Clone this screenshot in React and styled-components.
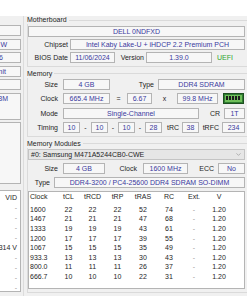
import React from "react";
import styled, { createGlobalStyle } from "styled-components";
import { ChevronDown } from "lucide-react";

const GlobalStyle = createGlobalStyle`
    body {
        margin: 0;
        background: #ffffff;
        font-family: "Liberation Sans", Arial, sans-serif;
    }
`;

const Window = styled.div`
    width: 247px;
    height: 296px;
    overflow: hidden;
    display: flex;
    flex-direction: column;
    background: #f0f0f0;
    font-size: 7px;
    color: #1e1e1e;
`;

const TopStrip = styled.div`
    height: 16px;
    flex-shrink: 0;
    background: #ffffff;
`;

const Body = styled.div`
    flex: 1;
    display: flex;
`;

// CPU pane: only its right edge is in view, the rest runs off to the left
const LeftPane = styled.div`
    width: 23px;
    flex-shrink: 0;
    border-right: 1px solid #dcdcdc;
`;

const LeftInner = styled.div`
    width: 80px;
    margin-left: -57px;
    display: flex;
    flex-direction: column;
    gap: 2.5px;
    padding-top: 9px;
`;

const CutBox = styled.div`
    height: ${(p) => p.h || 11}px;
    margin-right: 2px;
    box-sizing: border-box;
    border: 1px solid #b4b4b4;
    background: #f7f7f7;
    color: #3a3a9e;
    text-align: right;
    padding-right: ${(p) => p.pad || 12}px;
    line-height: 9px;
    white-space: nowrap;
`;

const CutList = styled.div`
    margin-top: 3px;
    margin-right: 2px;
    height: 102px;
    box-sizing: border-box;
    border: 1px solid #b4b4b4;
    background: #ffffff;
    padding: 2px 3px 0 0;
    text-align: right;
    line-height: 10px;
    white-space: nowrap;
`;

const ListLine = styled.div`
    color: ${(p) => (p.dim ? "#9a9a9a" : "#1e1e1e")};
`;

const RightPane = styled.div`
    flex: 1;
    padding-left: 3px;
    display: flex;
    flex-direction: column;
    gap: 3px;
`;

const Group = styled.fieldset`
    margin: 0;
    padding: 1.5px 2px 3px 0;
    border: 1px solid #dadada;
    border-right: none;
    min-width: 0;
    display: flex;
    flex-direction: column;
    gap: ${(p) => p.gap || 2}px;
`;

const Legend = styled.legend`
    padding: 0 2px 0 0;
    margin-left: -1px;
    line-height: 8px;
    color: #1e1e1e;
`;

const Row = styled.div`
    display: flex;
    align-items: center;
    height: 11px;
`;

const Label = styled.span`
    width: ${(p) => p.w}px;
    flex-shrink: 0;
    text-align: right;
    padding-right: ${(p) => p.pad ?? 2}px;
    box-sizing: border-box;
    white-space: nowrap;
`;

const Value = styled.div`
    width: ${(p) => (p.w ? `${p.w}px` : "auto")};
    flex: ${(p) => (p.w ? "none" : 1)};
    height: 11px;
    box-sizing: border-box;
    border: 1px solid #b4b4b4;
    background: #f7f7f7;
    color: #3a3a9e;
    text-align: center;
    line-height: 9px;
    white-space: nowrap;
    overflow: hidden;
`;

const Sep = styled.span`
    width: ${(p) => p.w}px;
    flex-shrink: 0;
    text-align: center;
`;

const Green = styled.span`
    color: #2fa52f;
    padding-left: 5px;
`;

const Select = styled.div`
    height: 11px;
    box-sizing: border-box;
    border: 1px solid #c4c4c4;
    background: #e6e6e6;
    display: flex;
    align-items: center;
    justify-content: space-between;
    padding: 0 2px;
    color: #1e1e1e;
`;

const Table = styled.div`
    height: 98px;
    box-sizing: border-box;
    border: 1px solid #b4b4b4;
    background: #ffffff;
    padding-top: 1px;
`;

const cols = "28px 23px 25px 25px 26px 26px 24px 26px";

const HeadRow = styled.div`
    display: grid;
    grid-template-columns: ${cols};
    height: 8px;
    line-height: 8px;
    margin-bottom: 3.5px;
`;

const DataRow = styled.div`
    display: grid;
    grid-template-columns: ${cols};
    height: 9.6px;
    line-height: 9.6px;
`;

const Cell = styled.span`
    text-align: ${(p) => (p.first ? "left" : "center")};
    padding-left: ${(p) => (p.first ? 1 : 0)}px;
    color: ${(p) => (p.dim ? "#9a9a9a" : "inherit")};
`;

const DimmIcon = () => (
    <svg width="21" height="11" viewBox="0 0 21 11">
        <rect x="0.5" y="0.5" width="20" height="10" fill="#2f7d32" stroke="#1d4f1f" />
        <rect x="2" y="2" width="17" height="7" fill="#6fbf5a" />
        {[3, 6, 9, 12, 15].map((x) => (
            <rect key={x} x={x} y="3" width="2" height="4" fill="#1b1b1b" />
        ))}
    </svg>
);

const timings = [
    ["1600", "22", "22", "22", "52", "74"],
    ["1467", "21", "21", "21", "47", "68"],
    ["1333", "19", "19", "19", "43", "61"],
    ["1200", "17", "17", "17", "39", "55"],
    ["1067", "15", "15", "15", "35", "49"],
    ["933.3", "13", "13", "13", "30", "43"],
    ["800.0", "11", "11", "11", "26", "37"],
    ["666.7", "10", "10", "10", "22", "31"],
];

const vids = ["-", "-", "-", "-", "0.7314 V", "-", "-", "-", "-"];

export default function App() {
    return (
        <>
            <GlobalStyle />
            <Window>
                <TopStrip />
                <Body>
                    <LeftPane>
                        <LeftInner>
                            <CutBox />
                            <CutBox pad={13}>15.0 W</CutBox>
                            <CutBox pad={17}>6</CutBox>
                            <CutBox pad={14}>Unit</CutBox>
                            <CutBox />
                            <CutBox h={27} pad={12}>L3 3M</CutBox>
                            <CutBox h={62} />
                            <CutList>
                                <ListLine>VID</ListLine>
                                {vids.map((v, i) => (
                                    <ListLine key={i} dim={v === "-"}>
                                        {v}
                                    </ListLine>
                                ))}
                            </CutList>
                        </LeftInner>
                    </LeftPane>

                    <RightPane>
                        <Group>
                            <Legend>Motherboard</Legend>
                            <Row>
                                <Value>DELL 0NDFXD</Value>
                            </Row>
                            <Row>
                                <Label w={42}>Chipset</Label>
                                <Value>Intel Kaby Lake-U + iHDCP 2.2 Premium PCH</Value>
                            </Row>
                            <Row>
                                <Label w={42}>BIOS Date</Label>
                                <Value w={45}>11/06/2024</Value>
                                <Label w={31}>Version</Label>
                                <Value w={66}>1.39.0</Value>
                                <Green>UEFI</Green>
                            </Row>
                        </Group>

                        <Group gap={3.3}>
                            <Legend>Memory</Legend>
                            <Row>
                                <Label w={35} pad={5}>Size</Label>
                                <Value w={47}>4 GB</Value>
                                <Label w={48} pad={4}>Type</Label>
                                <Value>DDR4 SDRAM</Value>
                            </Row>
                            <Row>
                                <Label w={35} pad={5}>Clock</Label>
                                <Value w={47}>665.4 MHz</Value>
                                <Sep w={17}>=</Sep>
                                <Value w={25}>6.67</Value>
                                <Sep w={25}>x</Sep>
                                <Value w={41}>99.8 MHz</Value>
                                <Sep w={5} />
                                <DimmIcon />
                            </Row>
                            <Row>
                                <Label w={35} pad={5}>Mode</Label>
                                <Value w={136}>Single-Channel</Value>
                                <Label w={25} pad={4}>CR</Label>
                                <Value>1T</Value>
                            </Row>
                            <Row>
                                <Label w={35} pad={5}>Timing</Label>
                                <Value w={17}>10</Value>
                                <Sep w={11}>-</Sep>
                                <Value w={17}>10</Value>
                                <Sep w={10}>-</Sep>
                                <Value w={17}>10</Value>
                                <Sep w={10}>-</Sep>
                                <Value w={17}>28</Value>
                                <Label w={20} pad={3}>tRC</Label>
                                <Value w={17}>38</Value>
                                <Label w={23} pad={3}>tRFC</Label>
                                <Value>234</Value>
                            </Row>
                        </Group>

                        <Group gap={3}>
                            <Legend>Memory Modules</Legend>
                            <Select>
                                <span>#0: Samsung M471A5244CB0-CWE</span>
                                <ChevronDown size={7} color="#8a8a8a" strokeWidth={2} />
                            </Select>
                            <Row>
                                <Label w={35} pad={5}>Size</Label>
                                <Value w={42}>4 GB</Value>
                                <Label w={38} pad={6}>Clock</Label>
                                <Value w={45}>1600 MHz</Value>
                                <Label w={30} pad={4}>ECC</Label>
                                <Value>No</Value>
                            </Row>
                            <Row>
                                <Label w={26} pad={4}>Type</Label>
                                <Value>DDR4-3200 / PC4-25600 DDR4 SDRAM SO-DIMM</Value>
                            </Row>
                            <Table>
                                <HeadRow>
                                    <Cell first>Clock</Cell>
                                    <Cell>tCL</Cell>
                                    <Cell>tRCD</Cell>
                                    <Cell>tRP</Cell>
                                    <Cell>tRAS</Cell>
                                    <Cell>RC</Cell>
                                    <Cell>Ext.</Cell>
                                    <Cell>V</Cell>
                                </HeadRow>
                                {timings.map((t) => (
                                    <DataRow key={t[0]}>
                                        <Cell first>{t[0]}</Cell>
                                        <Cell>{t[1]}</Cell>
                                        <Cell>{t[2]}</Cell>
                                        <Cell>{t[3]}</Cell>
                                        <Cell>{t[4]}</Cell>
                                        <Cell>{t[5]}</Cell>
                                        <Cell dim>-</Cell>
                                        <Cell>1.20</Cell>
                                    </DataRow>
                                ))}
                            </Table>
                        </Group>
                    </RightPane>
                </Body>
            </Window>
        </>
    );
}
